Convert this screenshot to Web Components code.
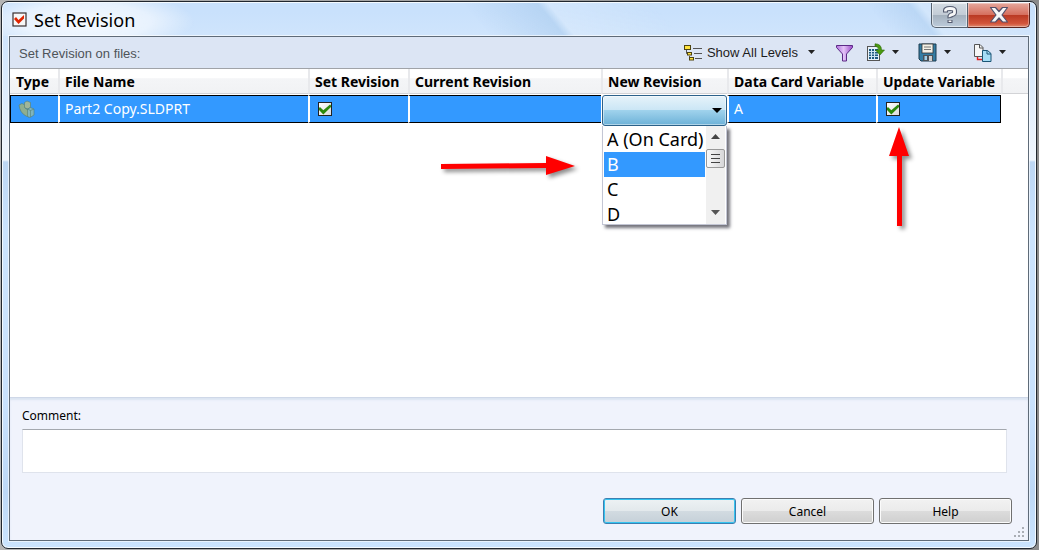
<!DOCTYPE html>
<html lang="en">
<head>
<meta charset="utf-8">
<title>Set Revision</title>
<style>
html,body{margin:0;height:100%}
body{background:linear-gradient(90deg,#b4b4b4,#8b8b8b);font-family:"Noto Sans","Open Sans",sans-serif;color:#000;overflow:hidden}
</style>
</head>
<body>
<revision-dialog>
  <tool-strip slot="tools"></tool-strip>
  <file-grid slot="grid"></file-grid>
  <comment-panel slot="footer"></comment-panel>
</revision-dialog>
<script>
function define(name, html) {
  const t = document.createElement('template');
  t.innerHTML = html;
  customElements.define(name, class extends HTMLElement {
    constructor() {
      super();
      this.attachShadow({ mode: 'open' }).append(t.content.cloneNode(true));
      const box = this.shadowRoot.querySelector('input[type=checkbox]');
      if (box) box.setAttribute('aria-label', this.getAttribute('label') || '');
    }
  });
}

define('revision-dialog', `
<style>
:host{display:flex;flex-direction:column;box-sizing:border-box;height:100vh;min-height:400px;padding:1px 2px 1px 1px}
.frame{flex:1;display:flex;flex-direction:column;min-height:0;border:1px solid #20262e;border-radius:7px;padding:0 7px 7px;
 box-shadow:inset 0 0 0 1px #f4faff;
 background:linear-gradient(180deg,#c9e1fc 0,#c9e1fc 10px,#d9eafc 70px,#f0f6fd 158px,#bdd7f4 160px,#cbe3fd 230px,#c9e2fd 400px,#bdd8f6 490px,#cbe4fe 100%)}
header{display:flex;height:33px;align-items:center;gap:7px;margin:1px -6px 0;padding-left:9px;border-radius:6px 6px 0 0;
 background:radial-gradient(ellipse 110px 30px at 82px 18px,rgba(255,255,255,.8),rgba(255,255,255,.55) 60%,rgba(255,255,255,0)),
 linear-gradient(50deg,transparent 46%,rgba(165,200,236,.5) 53%,rgba(225,238,252,.4) 54%,transparent 64%,transparent 84%,rgba(165,200,236,.4) 88%,rgba(225,238,252,.4) 89%,transparent)}
h1{margin:0;font-size:18px;line-height:24px;font-weight:400;flex:1}
.app{width:15px;height:15px}
.caps{display:flex;align-self:flex-start;height:25px;padding-right:5px}
.caps button{border:1px solid #56616e;border-top:0;padding:0;height:25px;width:37px;display:grid;place-items:center;border-radius:0 0 0 5px;
 background:linear-gradient(#d4dbe2,#c3ccd6 48%,#a4b0bd 50%,#bccbdb);box-shadow:inset 0 0 0 1px rgba(255,255,255,.55)}
.caps button.x{width:62px;border-left:0;border-color:#5b2620;border-radius:0 0 5px 0;background:linear-gradient(#e5a79c,#d6705f 48%,#b93822 50%,#d2553b 85%,#e08a70);box-shadow:inset 0 0 0 1px rgba(255,255,255,.35)}
.caps svg{display:block}
.client{flex:1;min-height:0;display:flex;flex-direction:column;border:1px solid #5f6b78;background:#fff;box-shadow:0 0 0 1px rgba(255,255,255,.6)}
slot[name=grid]::slotted(*){flex:1;min-height:0}
</style>
<div class="frame">
 <header>
  <svg class="app" viewBox="0 0 15 15"><rect x="1" y="1" width="13" height="13" fill="#f7f7f7" stroke="#3a3030" stroke-width="1.2"/><path d="M2 7l2-2 2.500 3L12 3v3.500L6.500 12z" fill="#df2500"/></svg>
  <h1>Set Revision</h1>
  <div class="caps">
   <button aria-label="Help"><svg width="16" height="20" viewBox="0 0 16 20"><path d="M3.500 7.500V5.500q0-2 4.500-2t4.500 2v2q0 1.500-2.500 2.200t-2 3.300M8 15v3" fill="none" stroke="#545b70" stroke-width="5"/><path d="M3.500 6.500V5.500q0-2 4.500-2t4.500 2v2q0 1.500-2.500 2.200t-2 2.300M8 15.500v1.500" fill="none" stroke="#f8f8f8" stroke-width="2.800"/></svg></button>
   <button class="x" aria-label="Close"><svg width="20" height="18" viewBox="0 0 20 18"><path d="M1.500 1.500h5L10 5.500l3.500-4h5L13 9l5.500 7h-5L10 12l-3.500 4h-5L7 9z" fill="#f6f6f6" stroke="#54506a" stroke-width="1.200" stroke-linejoin="round"/></svg></button>
  </div>
 </header>
 <div class="client"><slot name="tools"></slot><slot name="grid"></slot><slot name="footer"></slot></div>
</div>`);

define('tool-strip', `
<style>
:host{display:flex;align-items:center;height:31px;background:#dce5f4;border-bottom:1px solid #a0a3a8;padding:0 21px 0 9px;font:13px/16px "Liberation Sans",sans-serif}
.t{flex:1;color:#4e5358;padding-top:2px}
button{display:flex;align-items:center;border:0;padding:0;background:none;font:inherit;color:#1c1c1c}
.d{width:9px;height:5px;margin-left:6px}
.lv{margin-right:19px}.lv span{margin-left:4px}.lv .d{margin-left:9px}
.fn{margin-right:12px}.ex{margin-right:18px}.sv{margin-right:21px}
svg{display:block}
</style>
<span class="t">Set Revision on files:</span>
<button class="lv"><svg width="19" height="16" viewBox="0 0 19 16"><path d="M2.500 5v3.500h2M5.500 11v2.500h1" fill="none" stroke="#555"/><path d="M9 3.500h9M10 8.500h8M11 13.500h7" stroke="#555"/><g fill="#ffe23c" stroke="#4e4410"><rect x=".5" y=".5" width="6" height="4"/><rect x="3.500" y="7.500" width="4" height="2.500"/><rect x="5.500" y="12.500" width="4" height="2.500"/></g></svg><span>Show All Levels</span><svg class="d" viewBox="0 0 9 5"><path d="M1 0h7L4.500 4z" fill="#222"/></svg></button>
<button class="fn" aria-label="Filter"><svg width="19" height="18" viewBox="0 0 19 18"><defs><linearGradient id="p"><stop offset="0" stop-color="#b070dc"/><stop offset=".45" stop-color="#e4c4f8"/><stop offset="1" stop-color="#9a48c8"/></linearGradient></defs><path d="M1.500 1.500h16v2L11.500 10v7h-4v-7l-6-6.500z" fill="url(#p)" stroke="#5c2a86"/></svg></button>
<button class="ex" aria-label="Export"><svg width="19" height="19" viewBox="0 0 19 19"><rect x="1.500" y="3.500" width="12" height="14" fill="#e8f2fa" stroke="#555"/><path d="M3 6h9v10H3z" fill="#1e5a80"/><path d="M3 8.500h9M3 11h9M3 13.500h9M5.500 6v10M8.500 6v10" stroke="#cfe6f4"/><path d="M9 .8q6.500 0 6.500 6.200h3L14 12 9.500 7h3Q12.500 3.200 9 3.200z" fill="#4a9a10" stroke="#2e6a08" stroke-width=".6"/></svg><svg class="d" viewBox="0 0 9 5"><path d="M1 0h7L4.500 4z" fill="#222"/></svg></button>
<button class="sv" aria-label="Save"><svg width="19" height="19" viewBox="0 0 19 19"><path d="M1 1h17v17H3l-2-2z" fill="#347da3" stroke="#1c3d50"/><rect x="4" y="1" width="11" height="9" fill="#f4f1e6" stroke="#333" stroke-width=".8"/><path d="M6 4h7M6 6.500h7" stroke="#777"/><rect x="5" y="12" width="10" height="6" fill="#4b5257"/><rect x="6.500" y="13" width="2.500" height="4" fill="#9fd0ea"/><rect x="11" y="13" width="3" height="5" fill="#d0d0d0"/></svg><svg class="d" viewBox="0 0 9 5"><path d="M1 0h7L4.500 4z" fill="#222"/></svg></button>
<button aria-label="Copy"><svg width="19" height="19" viewBox="0 0 19 19"><path d="M1.500 1.500h5.500l3 3v9H1.500z" fill="#f6f6f6" stroke="#555"/><path d="M6.500 1.500V5H10" fill="none" stroke="#555"/><path d="M4.500 14v2.500H9" fill="none" stroke="#e02020" stroke-width="1.400"/><path d="M9.500 7.500h5l3.500 3v8H9.500z" fill="#a5ddf5" stroke="#1a5575"/><path d="M14 7.500V11h4" fill="none" stroke="#1a5575"/></svg><svg class="d" viewBox="0 0 9 5"><path d="M1 0h7L4.500 4z" fill="#222"/></svg></button>
`);

define('tick-box', `
<style>
:host{display:block;width:14px;height:14px;margin-left:3px}
input{appearance:none;display:block;box-sizing:border-box;margin:0;width:14px;height:14px;border:1px solid #222;background:linear-gradient(135deg,#fff,#dcdcdc)}
input:checked::before{content:"";display:block;height:12px;background:#2c8a0c;clip-path:polygon(0 42%,8% 34%,36% 60%,92% 12%,100% 20%,100% 34%,36% 96%,0 58%)}
</style><input type="checkbox" checked>`);

define('revision-picker', `
<style>
:host{display:block;position:relative;height:31px;color:#000}
select{appearance:none;display:block;box-sizing:border-box;width:100%;height:31px;border:1px solid #2c628b;border-radius:3px;box-shadow:inset 0 0 0 1px rgba(255,255,255,.45);
 background:linear-gradient(#e6f3fa,#cbe6f5 48%,#9fd2ec 50%,#6db2d8)}
.a{position:absolute;right:5px;top:13px}
.pop{position:absolute;left:0;top:31px;width:100%;height:99px;box-sizing:border-box;display:flex;border:1px solid #c3c6d4;border-top:0;background:#fff;box-shadow:3px 3px 3px rgba(70,70,80,.75)}
ul{flex:1;list-style:none;margin:0;padding:1px 0 0 1px;font-size:18px;line-height:25px;white-space:nowrap}
li{height:25px;padding-left:3px}
li[aria-selected=true]{background:#39f;color:#fff}
.bar{width:19px;margin:0 1px;background:#f0f0f0;display:flex;flex-direction:column;align-items:center;justify-content:space-between}
.bar svg{display:block}
.th{width:19px;height:19px;box-sizing:border-box;border:1px solid #999;border-radius:2px;background:linear-gradient(90deg,#fafafa,#d6d6d8);display:grid;place-items:center}
</style>
<select aria-label="New Revision"><option value=""></option></select>
<svg class="a" width="10" height="6" viewBox="0 0 10 6"><path d="M0 0h10L5 5z"/></svg>
<div class="pop">
<ul role="listbox" aria-label="Revisions"><li role="option">A (On Card)</li><li role="option" aria-selected="true">B</li><li role="option">C</li><li role="option">D</li></ul>
<div class="bar"><div><svg width="19" height="23" viewBox="0 0 19 23"><path d="M5 13h9L9.500 8z" fill="#444"/></svg><div class="th"><svg width="9" height="10" viewBox="0 0 9 10"><path d="M0 .5h9M0 4.500h9M0 8.500h9" stroke="#444"/></svg></div></div>
<svg width="19" height="22" viewBox="0 0 19 22"><path d="M5 8h9l-4.500 5z" fill="#555"/></svg></div>
</div>`);

define('file-grid', `
<style>
:host{display:block;position:relative;background:#fff}
table{width:100%;table-layout:fixed;border-collapse:separate;border-spacing:0}
th{height:25px;padding:2px 0 0 5px;box-sizing:border-box;text-align:left;font-size:14px;line-height:20px;font-weight:700;white-space:nowrap;border-left:2px solid #e8e9ec;border-bottom:1px solid #d2d3d6;background:linear-gradient(#fff 38%,#f4f5f7 40%,#f1f2f4)}
th:first-child{border-left:0;padding-left:6px}
.sp td{height:1px;padding:0}
.row td{height:28px;box-sizing:border-box;padding:0 0 0 5px;font-size:14px;line-height:20px;color:#fff;white-space:nowrap;background:#39f;border:solid #000;border-width:1px 0;border-left:2px solid #fff;background-clip:padding-box}
.row td:first-child{border-left:1px solid #000;padding-left:7px}
.row td.last{border-right:1px solid #000}
.row td:last-child{background:none;border:0}
.row td.pick{padding:0 0 0 1px;border:0;background:none;vertical-align:top}
.pick div{height:28px}
.m{position:absolute;overflow:visible;filter:drop-shadow(3px 3px 2px rgba(0,0,0,.45))}
.m path{fill:#f00}
.right{left:431px;top:87px}
.up{left:879px;top:58px}
svg{display:block}
</style>
<table>
<colgroup><col style="width:48px"><col style="width:250px"><col style="width:100px"><col style="width:193px"><col style="width:126px"><col style="width:149px"><col style="width:125px"><col></colgroup>
<thead><tr><th>Type</th><th>File Name</th><th>Set Revision</th><th>Current Revision</th><th>New Revision</th><th>Data Card Variable</th><th>Update Variable</th><th></th></tr></thead>
<tbody><tr class="sp"><td colspan="8"></td></tr>
<tr class="row"><td><svg width="17" height="18" viewBox="0 0 17 18"><g stroke="#557f72" stroke-width=".6" stroke-linejoin="round"><path d="M1 5l3-1.500L7 5v3l4 3v6l-3-1Q2 13 1 5z" fill="#8fae90"/><path d="M6.500 2.500L9 1l3.500 1.500v5L9.500 9l-3-1.500z" fill="#a0b69a"/><path d="M9.500 9l3-1.500L16 9v6l-4 2.500-2.500-1z" fill="#7fb4bd"/><path d="M9.500 9l3 1.500L16 9M12.500 10.500v6.500" fill="none"/></g></svg></td><td>Part2 Copy.SLDPRT</td><td><tick-box label="Set Revision"></tick-box></td><td></td><td class="pick"><div><revision-picker></revision-picker></div></td><td>A</td><td class="last"><tick-box label="Update Variable"></tick-box></td><td></td></tr></tbody>
</table>
<svg class="m right" width="134" height="20" viewBox="0 0 134 20"><path d="M0 8l105-1V0l29 10-29 9v-7L0 13z"/></svg>
<svg class="m up" width="20" height="100" viewBox="0 0 20 100"><path d="M10 0l10 29h-7v70H8V29H0z"/></svg>
`);

define('comment-panel', `
<style>
:host{display:flex;flex-direction:column;position:relative;background:#f0f3fc;border-top:1px solid #cfd8e8;box-shadow:inset 0 2px 2px #dbe4f2;padding:9px 16px 16px 12px;font-size:12px;line-height:18px}
textarea{display:block;box-sizing:border-box;height:44px;margin:4px 5px 0 0;resize:none;border:1px solid #dfe3ec;border-top-color:#a4a8ae;background:#fff;padding:4px;font:inherit}
.b{display:flex;justify-content:flex-end;gap:5px;margin-top:25px}
button{box-sizing:border-box;width:133px;height:26px;border:1px solid #707070;border-radius:3px;padding:1px 0 0;font:inherit;line-height:18px;color:#000;box-shadow:inset 0 0 0 1px #fbfbfb;background:linear-gradient(#f2f2f2,#ebebeb 48%,#dcdcdc 50%,#cfcfcf)}
button.ok{border-color:#3c7fb1;box-shadow:inset 0 0 0 1px #35c4f0;background:linear-gradient(#edf2f4,#e3e9ec 48%,#d2dbe1 50%,#c5d0d8)}
svg{position:absolute;right:3px;bottom:2px}
</style>
<label for="c">Comment:</label><textarea id="c"></textarea>
<div class="b"><button class="ok">OK</button><button>Cancel</button><button>Help</button></div>
<svg width="12" height="12" viewBox="0 0 12 12" fill="#aaaeb5"><path d="M9 1h2v2H9zM9 5h2v2H9zM5 5h2v2H5zM9 9h2v2H9zM5 9h2v2H5zM1 9h2v2H1z"/></svg>
`);
</script>
</body>
</html>
